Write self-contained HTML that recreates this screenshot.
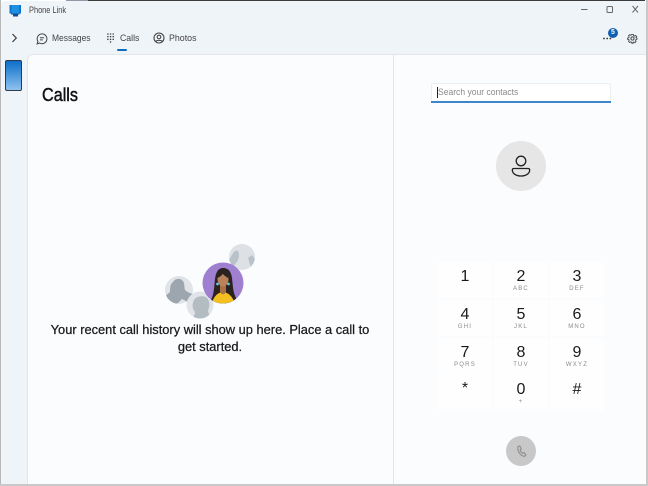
<!DOCTYPE html>
<html><head><meta charset="utf-8"><style>
html,body{margin:0;padding:0}
body{width:648px;height:486px;overflow:hidden;background:#fff;position:relative;font-family:"Liberation Sans",sans-serif;color:#1b1b1b}
div,svg{position:absolute}
.t{white-space:nowrap;line-height:1;transform-origin:0 50%}
.k{width:54px;height:36px;background:#fefefe;border-radius:2px}
.d{left:0;width:54px;text-align:center;font-size:16px;top:6px;line-height:18px;color:#1a1a1a}
.s{left:0;width:54px;text-align:center;font-size:6px;letter-spacing:1.2px;top:24px;line-height:7px;color:#8a8a8a}
</style></head><body>
<div style="left:0;top:0;width:648px;height:486px;background:#ffffff"></div>
<div style="left:66px;top:0;width:22px;height:1px;background:#8f9aa6"></div>
<div style="left:88px;top:0;width:557px;height:1px;background:#3a3a3a"></div>
<div style="left:0;top:0;width:1px;height:486px;background:#b8b8b8"></div>
<div style="left:646px;top:0;width:2px;height:486px;background:#c9c9c9"></div>
<div style="left:0;top:484px;width:648px;height:2px;background:#c9c9c9"></div>
<div style="left:1px;top:1px;width:645px;height:483px;background:#eff4f9;border-top-left-radius:4px;border-top-right-radius:4px"></div>
<div style="left:27px;top:54px;width:619px;height:430px;background:#fbfcfe;border-top:1px solid #e2e6ea;border-left:1px solid #e2e6ea;box-sizing:border-box;border-top-left-radius:6px"></div>
<div style="left:393px;top:54px;width:1px;height:430px;background:#e2e5e9"></div>
<svg style="left:8px;top:4px" width="15" height="13" viewBox="0 0 15 13"><path d="M1.500 1h11.500v8.500H1.500z" fill="#0a74cf"/><path d="M3 9h8.500v1.500h-1.500v2h-5v-2H3z" fill="#0d4f96"/><path d="M3.500 1h7.500v8.500H3.500z" fill="#1d90e4"/></svg>
<div class="t" style="left:29px;top:6px;font-size:9.5px;color:#444;transform:scaleX(.78)">Phone Link</div>
<svg style="left:576px;top:4px" width="64" height="12" viewBox="0 0 64 12" fill="none" stroke="#666" stroke-width="1"><path d="M5 5.500h6.500"/><rect x="31" y="2.500" width="5.500" height="6" rx="1"/><path d="M56.500 2l5.500 6.500M62 2l-5.500 6.500"/></svg>
<svg style="left:11px;top:33px" width="7" height="10" viewBox="0 0 7 10" fill="none" stroke="#333" stroke-width="1.100"><path d="M1.500 1l3.800 4-3.800 4"/></svg>
<svg style="left:36px;top:33px" width="12" height="12" viewBox="0 0 13 13" fill="none" stroke="#444" stroke-width="1.100"><path d="M6.500 1a5.300 5.300 0 1 1-2.600 9.900L1.200 11.800l.9-2.700A5.300 5.300 0 0 1 6.500 1z"/><path d="M4.300 5.200h4.400M4.300 7.500h3"/></svg>
<div class="t" style="left:52px;top:34px;font-size:9.5px;color:#444;transform:scaleX(.89)">Messages</div>
<svg style="left:107px;top:33px" width="8" height="10" viewBox="0 0 9 11" fill="#444"><circle cx="1" cy="1" r=".9"/><circle cx="4" cy="1" r=".9"/><circle cx="7" cy="1" r=".9"/><circle cx="1" cy="4" r=".9"/><circle cx="4" cy="4" r=".9"/><circle cx="7" cy="4" r=".9"/><circle cx="1" cy="7" r=".9"/><circle cx="4" cy="7" r=".9"/><circle cx="7" cy="7" r=".9"/><circle cx="4" cy="10" r=".9"/></svg>
<div class="t" style="left:120px;top:34px;font-size:9.5px;color:#444;transform:scaleX(.92)">Calls</div>
<div style="left:117px;top:49px;width:10px;height:2px;background:#0f6cbd;border-radius:1px"></div>
<svg style="left:153px;top:32px" width="12" height="12" viewBox="0 0 12 12" fill="none" stroke="#444" stroke-width="1.100"><circle cx="6" cy="6" r="5"/><circle cx="6" cy="5" r="1.800"/><path d="M2.600 9.500C3.500 8 8.500 8 9.400 9.500"/></svg>
<div class="t" style="left:169px;top:34px;font-size:9.5px;color:#444;transform:scaleX(.93)">Photos</div>
<svg style="left:603px;top:37px" width="9" height="3" viewBox="0 0 9 3" fill="#333"><circle cx="1" cy="1.500" r=".9"/><circle cx="4.200" cy="1.500" r=".9"/><circle cx="7.400" cy="1.500" r=".9"/></svg>
<div style="left:608px;top:28px;width:10px;height:10px;border-radius:50%;background:#0f5fb0;color:#fff;font-size:7px;line-height:10px;text-align:center;font-weight:bold">5</div>
<svg style="left:626.500px;top:32.500px" width="11" height="11" viewBox="0 0 24 24" fill="none" stroke="#444" stroke-width="2.200"><circle cx="12" cy="12" r="3.500"/><path d="M10 2h4l.7 3 2.200 1 2.700-1.600 2.800 2.800L20.800 10l.2 0 2 1v3l-2.500.7-1 2.200 1.300 2.600-2.800 2.800-2.600-1.500-2.200.9L13.500 24h-3l-.7-2.800-2.200-.9-2.600 1.500-2.800-2.800 1.500-2.600-.9-2.200L0 14v-3l2.800-.9.900-2.200L2.200 5.200 5 2.400l2.700 1.600 1.700-1z" transform="translate(12 12) scale(.88) translate(-12 -12)"/></svg>
<div style="left:5px;top:60px;width:15px;height:29px;border:1px solid #2f3b46;border-radius:2px;background:linear-gradient(#0c6fcb,#8fc2ee)"></div>
<div class="t" style="left:42px;top:86px;font-size:18px;color:#111;transform:scaleX(.9);-webkit-text-stroke:.45px #111">Calls</div>
<svg style="left:160px;top:238px" width="100" height="84" viewBox="0 0 100 84">
<defs><clipPath id="a"><circle cx="82" cy="19" r="13"/></clipPath><clipPath id="b"><circle cx="19" cy="52" r="14"/></clipPath><clipPath id="c"><circle cx="40" cy="67" r="13.500"/></clipPath><clipPath id="p"><circle cx="63" cy="45" r="20.500"/></clipPath></defs>
<circle cx="82" cy="19" r="13" fill="#dde1e6"/>
<g clip-path="url(#a)" fill="#b9c1c9"><path d="M68 22c3-1 3-5 6-8 3-3 5-1 5 3s-2 7-4 9l-3 5H68z"/><path d="M88 20l4-3 4 6-5 7z"/></g>
<circle cx="19" cy="52" r="14" fill="#e0e4e8"/>
<g clip-path="url(#b)" fill="#9da5ae"><path d="M2 66c1-6 4-9 8-12 0-3 0-8 3-10 2-4 8-4 10-1 2 3 1 6 2 9 3 3 6 3 9 5l0 4-4 4-8-4-4 4-6 2H2z"/></g>
<circle cx="40" cy="67" r="13.500" fill="#e0e4e8"/>
<g clip-path="url(#c)" fill="#b3bcc3"><path d="M32 84c1-6 3-7 3-10-3-3-3-8-1-12 2-4 10-5 13-2 3 3 3 9 1 12 0 3 2 5 3 10z"/></g>
<circle cx="63" cy="45" r="20.500" fill="#9f7fd0"/>
<g clip-path="url(#p)">
<path d="M51 62c3-6 3-12 4-21 1-8 4-11 8-11 5 0 8 3 9 10 1 9 1 15 5 22l-8 6H58z" fill="#2a2320"/>
<path d="M51 70c1-12 8-16 12-16s11 4 13 16z" fill="#f4bf21"/>
<path d="M60 47h6v7c-2 3-4 3-6 0z" fill="#a97049"/>
<ellipse cx="63" cy="41" rx="5.500" ry="7.500" fill="#b9825a"/>
<path d="M57 40c0-5 3-7 6-7 2 0 5 2 5.500 7-3-1-4-3-6-4-1 2-3 3-5.500 4z" fill="#2a2320"/>
<circle cx="57.500" cy="46" r="1.400" fill="#6cc3dc"/><circle cx="68.500" cy="46" r="1.400" fill="#6cc3dc"/>
</g></svg>
<div style="left:28px;top:321px;width:364px;text-align:center;font-size:12.850px;line-height:17px;color:#1a1a1a;-webkit-text-stroke:.25px #1a1a1a">Your recent call history will show up here. Place a call to<br>get started.</div>
<div style="left:431px;top:83px;width:180px;height:19px;box-sizing:border-box;background:#fff;border-radius:2px;border:1px solid #eceef0;border-bottom:none"></div>
<div style="left:431px;top:101px;width:180px;height:2px;background:#3a85cc"></div>
<div style="left:437px;top:87px;width:1px;height:11px;background:#222"></div>
<div class="t" style="left:438px;top:88px;font-size:9.500px;color:#8b8b8b;transform:scaleX(.9)">Search your contacts</div>
<div style="left:496px;top:141px;width:50px;height:50px;border-radius:50%;background:#e6e6e6"></div>
<svg style="left:511px;top:155px" width="20" height="23" viewBox="0 0 20 23" fill="none" stroke="#222" stroke-width="1.300"><circle cx="10" cy="6" r="4.800"/><path d="M3 13.500h14c1.200 0 1.700.6 1.700 1.500 0 3.500-3.700 6-8.700 6s-8.700-2.500-8.700-6c0-.9.500-1.500 1.700-1.500z"/></svg>
<div class="k" style="left:438px;top:262px"><div class="d">1</div></div>
<div class="k" style="left:494px;top:262px"><div class="d">2</div><div class="s">ABC</div></div>
<div class="k" style="left:550px;top:262px"><div class="d">3</div><div class="s">DEF</div></div>
<div class="k" style="left:438px;top:300px"><div class="d">4</div><div class="s">GHI</div></div>
<div class="k" style="left:494px;top:300px"><div class="d">5</div><div class="s">JKL</div></div>
<div class="k" style="left:550px;top:300px"><div class="d">6</div><div class="s">MNO</div></div>
<div class="k" style="left:438px;top:338px"><div class="d">7</div><div class="s">PQRS</div></div>
<div class="k" style="left:494px;top:338px"><div class="d">8</div><div class="s">TUV</div></div>
<div class="k" style="left:550px;top:338px"><div class="d">9</div><div class="s">WXYZ</div></div>
<div class="k" style="left:438px;top:375px"><div class="d" style="top:5px">*</div></div>
<div class="k" style="left:494px;top:375px"><div class="d">0</div><div class="s">+</div></div>
<div class="k" style="left:550px;top:375px"><div class="d" style="top:6px">#</div></div>
<div style="left:506px;top:436px;width:30px;height:30px;border-radius:50%;background:#c8c8c8"></div>
<svg style="left:516px;top:445px" width="11" height="13" viewBox="0 0 11 12" fill="none" stroke="#8e8e8e" stroke-width="1.100"><path d="M2 1l1.800-.5 1.500 3-1.200 1c.4 1.500 1.300 2.600 2.600 3.300l1.200-.8 2 2.400-1.300 1.400C5 11 1 6 2 1z"/></svg>
</body></html>
